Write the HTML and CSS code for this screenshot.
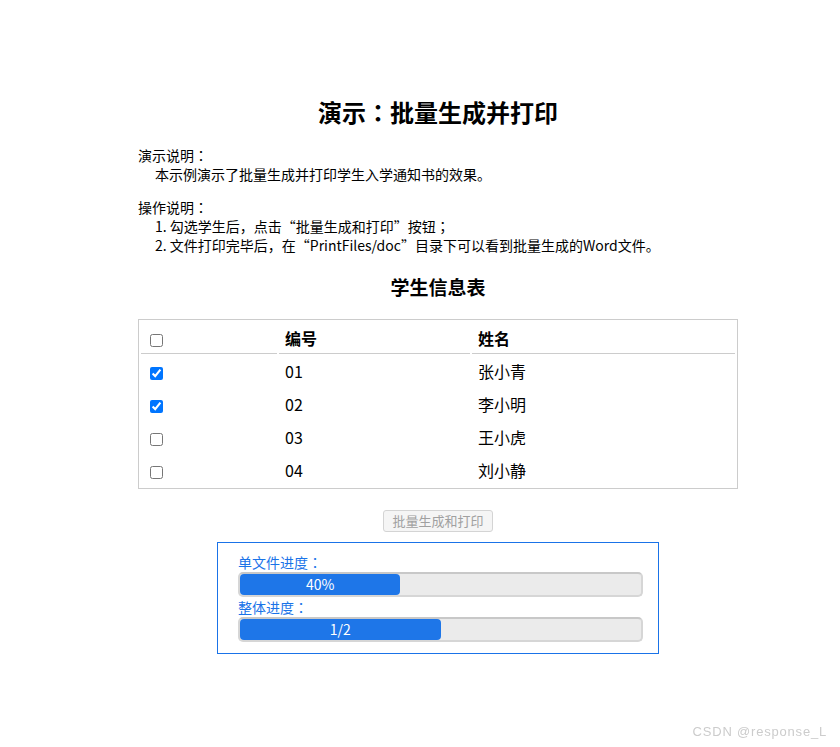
FILE: index.html
```html
<!DOCTYPE html>
<html lang="zh-CN">
<head>
<meta charset="utf-8">
<title>演示：批量生成并打印</title>
<link rel="stylesheet" href="styles.css">
</head>
<body>
<div class="page">
  <h1 class="title">演示<span class="punct" lang="zh-TW">：</span>批量生成并打印</h1>
  <div class="desc">
    <div>演示说明<span class="punct" lang="zh-TW">：</span></div>
    <div class="indent">本示例演示了批量生成并打印学生入学通知书的效果。</div>
  </div>
  <div class="desc second">
    <div>操作说明<span class="punct" lang="zh-TW">：</span></div>
    <div class="indent">1. 勾选学生后，点击“批量生成和打印”按钮<span class="punct" lang="zh-TW">；</span></div>
    <div class="indent">2. 文件打印完毕后，在“PrintFiles/doc”目录下可以看到批量生成的Word文件。</div>
  </div>
  <h2 class="subtitle">学生信息表</h2>
  <table class="students">
    <colgroup>
      <col class="c1"><col class="c2"><col class="c3">
    </colgroup>
    <thead>
      <tr><th><input type="checkbox" class="cb"></th><th>编号</th><th>姓名</th></tr>
    </thead>
    <tbody>
      <tr><td><input type="checkbox" class="cb" checked></td><td>01</td><td>张小青</td></tr>
      <tr><td><input type="checkbox" class="cb" checked></td><td>02</td><td>李小明</td></tr>
      <tr><td><input type="checkbox" class="cb"></td><td>03</td><td>王小虎</td></tr>
      <tr><td><input type="checkbox" class="cb"></td><td>04</td><td>刘小静</td></tr>
    </tbody>
  </table>
  <div class="actions"><button class="btn" disabled>批量生成和打印</button></div>
  <div class="progress-box">
    <div class="plabel">单文件进度<span class="punct" lang="zh-TW">：</span></div>
    <div class="bar"><div class="fill" style="width:40%">40%</div></div>
    <div class="plabel">整体进度<span class="punct" lang="zh-TW">：</span></div>
    <div class="bar"><div class="fill" style="width:50%">1/2</div></div>
  </div>
</div>
<div class="watermark">CSDN @response_L</div>
</body>
</html>
```
FILE: styles.css
```css
html, body {
  margin: 0;
  padding: 0;
  background: #fff;
}
body {
  font-family: "Noto Sans CJK SC", "Noto Sans", sans-serif;
  font-size: 14px;
  color: #000;
}
.punct {
  font-family: "Noto Sans CJK TC", "Noto Sans CJK SC", sans-serif;
}
.page {
  width: 600px;
  margin-left: 138px;
  padding-top: 95px;
}
.title {
  margin: 0;
  font-size: 24px;
  line-height: 34px;
  font-weight: bold;
  text-align: center;
}
.desc {
  margin-top: 17px;
  line-height: 19px;
}
.desc.second {
  margin-top: 14px;
}
.indent {
  padding-left: 17px;
}
.subtitle {
  margin: 19px 0 0;
  font-size: 19px;
  line-height: 26px;
  font-weight: bold;
  text-align: center;
}
.students {
  margin-top: 19px;
  width: 600px;
  table-layout: fixed;
  border: 1px solid #cccccc;
  border-collapse: separate;
  border-spacing: 2px;
  font-size: 16px;
}
.c1 { width: 136px; }
.c2 { width: 191px; }
.c3 { width: 263px; }
.students th,
.students td {
  padding: 0 6px;
  text-align: left;
  box-sizing: border-box;
}
.students th {
  height: 32px;
  border-bottom: 1px solid #cccccc;
  font-weight: bold;
}
.students td {
  height: 31px;
  padding-bottom: 2px;
}
.cb {
  width: 13px;
  height: 13px;
  margin: 0 0 0 3px;
  vertical-align: middle;
}
.actions {
  display: flex;
  justify-content: center;
  margin-top: 21px;
}
.btn {
  width: 110px;
  height: 22px;
  font-family: inherit;
  font-size: 13px;
  line-height: 18px;
  padding: 0;
  color: #a0a0a0;
  background: #f5f5f5;
  border: 1px solid #d4d4d4;
  border-radius: 3px;
}
.progress-box {
  width: 442px;
  box-sizing: border-box;
  margin: 10px auto 0;
  border: 1px solid #1a73e8;
  padding: 9px 15px 11px 20px;
}
.plabel {
  color: #1a73e8;
  font-size: 14px;
  line-height: 20px;
}
.bar {
  height: 25px;
  box-sizing: border-box;
  background: #ebebeb;
  border: 2px solid #d6d6d6;
  border-top-color: #c8c8c8;
  border-radius: 5px;
}
.fill {
  height: 100%;
  background: #1e76e8;
  border-radius: 4px;
  color: #fff;
  font-size: 14px;
  line-height: 21px;
  text-align: center;
}
.watermark {
  position: fixed;
  right: 13px;
  bottom: 6px;
  color: #cccccc;
  font-family: "Liberation Sans", sans-serif;
  font-size: 13px;
  letter-spacing: 0.8px;
  line-height: 18px;
}
```
